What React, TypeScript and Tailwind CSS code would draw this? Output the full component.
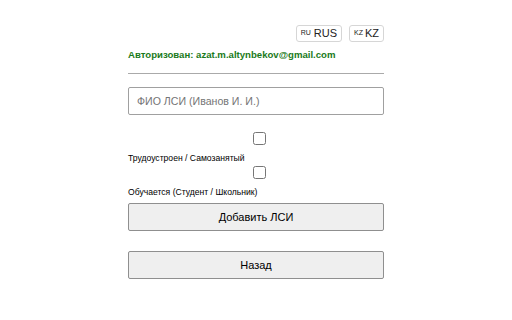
export default function App() {
  return (
    <div className="w-[512px] h-[320px] bg-white font-['Liberation_Sans',Arial,sans-serif] text-black">
      <div className="w-[256px] mx-auto pt-[25px] flex flex-col">
        <div className="flex justify-end gap-[7px]">
          <button className="h-[17px] px-[4px] flex items-center gap-[3px] border border-[#d6d6d6] rounded-[3px] bg-white text-[11px] text-[#222]">
            <span className="text-[7px] font-normal">RU</span>
            <span>RUS</span>
          </button>
          <button className="h-[17px] px-[4px] flex items-center gap-[2px] border border-[#d6d6d6] rounded-[3px] bg-white text-[11px] text-[#222]">
            <span className="text-[7px]">KZ</span>
            <span>KZ</span>
          </button>
        </div>
        <div className="mt-[6px] text-[9.6px] font-bold text-[#1a7a1a] leading-[14px]">
          Авторизован: azat.m.altynbekov@gmail.com
        </div>
        <hr className="mt-[11px] border-0 border-t border-[#aaaaaa]" />
        <input
          className="mt-[13px] h-[28px] w-full border border-[#a0a0a0] rounded-[2px] px-[8px] text-[10.6px] outline-none placeholder:text-[#757575]"
          placeholder="ФИО ЛСИ (Иванов И. И.)"
        />
        <div className="mt-[17px] flex justify-center pl-[6px]">
          <input type="checkbox" className="w-[13px] h-[13px] m-0" />
        </div>
        <div className="mt-[7px] text-[8.6px] leading-[12px]">Трудоустроен / Самозанятый</div>
        <div className="mt-[2px] flex justify-center pl-[6px]">
          <input type="checkbox" className="w-[13px] h-[13px] m-0" />
        </div>
        <div className="mt-[7px] text-[8.6px] leading-[12px]">Обучается (Студент / Школьник)</div>
        <button className="mt-[5px] h-[28px] w-full bg-[#efefef] border border-[#8f8f8f] rounded-[2px] text-[11px]">
          Добавить ЛСИ
        </button>
        <button className="mt-[20px] h-[28px] w-full bg-[#efefef] border border-[#8f8f8f] rounded-[2px] text-[11px]">
          Назад
        </button>
      </div>
    </div>
  );
}
